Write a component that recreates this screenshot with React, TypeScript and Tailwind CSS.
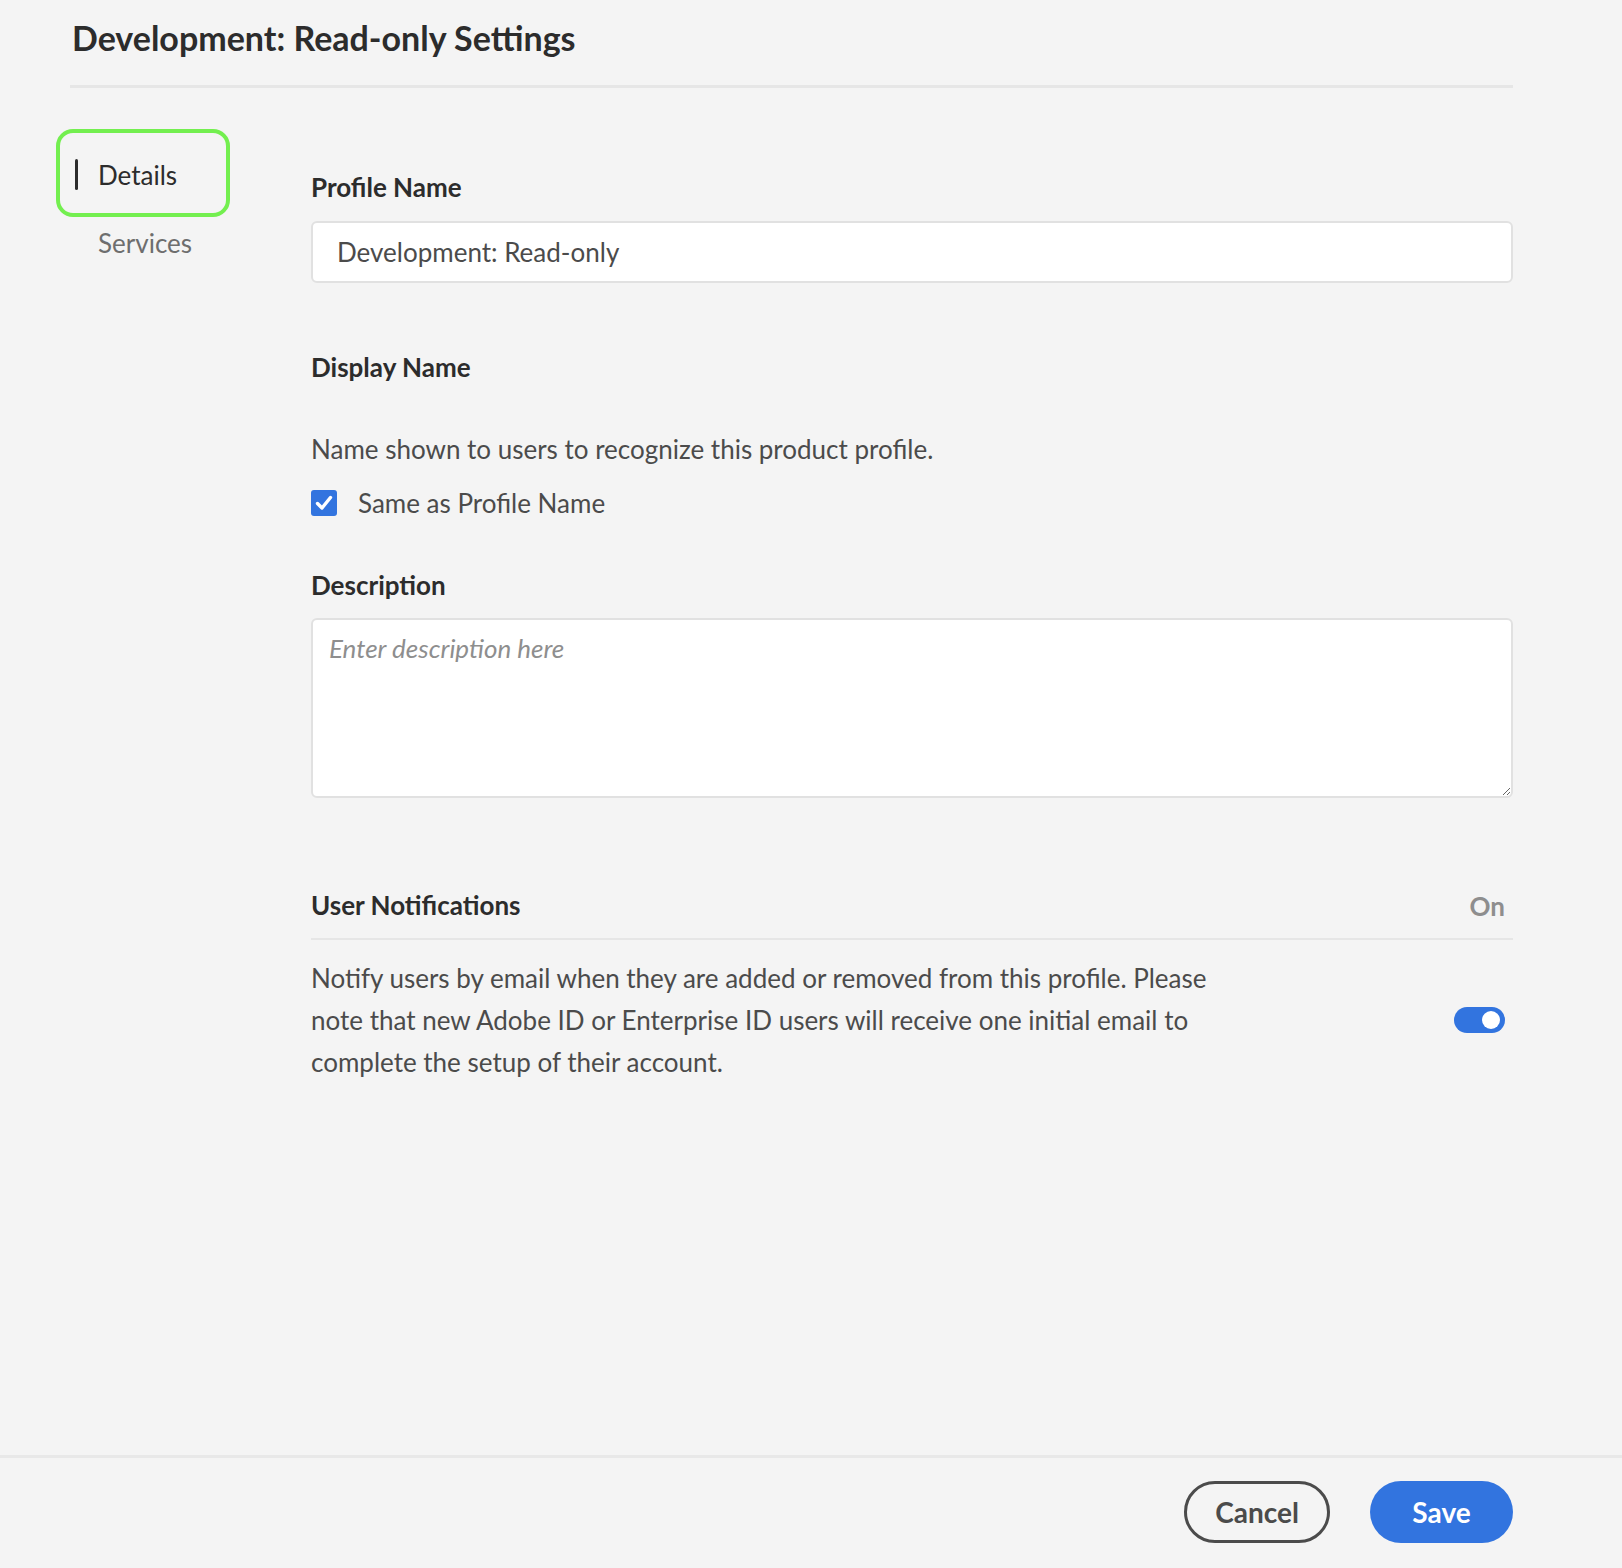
import { useState } from 'react';

const font = { fontFamily: 'Lato, "Noto Sans", sans-serif' };

const Toggle = ({ on, onChange }: { on: boolean; onChange: () => void }) => (
  <button
    onClick={onChange}
    className={`relative w-[51px] h-[26px] rounded-full shrink-0 ${on ? 'bg-[#3274df]' : 'bg-[#b3b3b3]'}`}
  >
    <span
      className={`absolute top-[4px] w-[18px] h-[18px] rounded-full bg-white ${on ? 'right-[5px]' : 'left-[5px]'}`}
    />
  </button>
);

const App = () => {
  const [same, setSame] = useState(true);
  const [notify, setNotify] = useState(true);

  return (
    <div className="h-[1568px] bg-[#f4f4f4] flex flex-col text-[#4b4b4b]" style={font}>
      {/* header */}
      <div className="ml-[70px] w-[1443px]">
        <h1 className="pt-[16px] pl-[2px] text-[34px] leading-[44px] font-bold text-[#2c2c2c]">
          Development: Read-only Settings
        </h1>
        <div className="mt-[25px] h-[3px] bg-[#e6e6e6]" />
      </div>

      <div className="flex-1 flex">
        {/* side nav */}
        <nav className="w-[311px] pl-[56px] pt-[41px] shrink-0">
          <div className="w-[174px] h-[88px] border-[4px] border-[#73ef4f] rounded-[17px] flex items-center pl-[15px] pt-[3px]">
            <span className="w-[3px] h-[31px] bg-[#2c2c2c] rounded-sm" />
            <span className="ml-[20px] text-[26px] leading-[32px] text-[#2c2c2c]">Details</span>
          </div>
          <div className="mt-[10px] ml-[42px] text-[26px] leading-[32px] text-[#6e6e6e]">Services</div>
        </nav>

        {/* form */}
        <div className="w-[1202px] pt-[83px]">
          <label className="block text-[26px] leading-[32px] font-bold text-[#2c2c2c]">Profile Name</label>
          <input
            defaultValue="Development: Read-only"
            className="mt-[18px] w-full h-[62px] bg-white border-2 border-[#e1e1e1] rounded-[6px] px-[24px] text-[26px] text-[#4b4b4b] outline-none"
          />

          <div className="mt-[68px] text-[26px] leading-[32px] font-bold text-[#2c2c2c]">Display Name</div>
          <p className="mt-[50px] text-[26px] leading-[32px]">
            Name shown to users to recognize this product profile.
          </p>
          <label className="mt-[22px] flex items-center h-[32px] cursor-pointer">
            <span
              onClick={() => setSame(!same)}
              className={`w-[26px] h-[26px] rounded-[3px] flex items-center justify-center ${same ? 'bg-[#3274df]' : 'bg-white border-2 border-[#6e6e6e]'}`}
            >
              {same && (
                <svg width="26" height="26" viewBox="0 0 26 26" fill="none">
                  <path d="M6.5 13.5 L11 18 L19.5 7.5" stroke="white" strokeWidth="3.4" strokeLinecap="round" strokeLinejoin="round" />
                </svg>
              )}
            </span>
            <span className="ml-[21px] text-[26px] leading-[32px]">Same as Profile Name</span>
          </label>

          <div className="mt-[50px] text-[26px] leading-[32px] font-bold text-[#2c2c2c]">Description</div>
          <textarea
            placeholder="Enter description here"
            className="mt-[17px] block w-full h-[180px] bg-white border-2 border-[#e1e1e1] rounded-[6px] px-[16px] pt-[12px] pb-[10px] text-[26px] leading-[32px] outline-none placeholder:italic placeholder:text-[#8e8e8e]"
          />

          <div className="mt-[89px] flex items-center justify-between pr-[8px]">
            <span className="text-[26px] leading-[32px] font-bold text-[#2c2c2c]">User Notifications</span>
            <span className="text-[26px] leading-[32px] font-bold text-[#8e8e8e] pt-[3px]">{notify ? 'On' : 'Off'}</span>
          </div>
          <div className="mt-[16px] h-[2px] bg-[#e6e6e6]" />
          <div className="mt-[17px] flex items-center justify-between pr-[8px]">
            <p className="max-w-[905px] text-[26px] leading-[42px]">
              Notify users by email when they are added or removed from this profile. Please note that new Adobe ID
              or Enterprise ID users will receive one initial email to complete the setup of their account.
            </p>
            <Toggle on={notify} onChange={() => setNotify(!notify)} />
          </div>
        </div>
      </div>

      {/* footer */}
      <div className="border-t-[3px] border-[#e8e8e8] h-[113px] flex items-start justify-end gap-[40px] pt-[23px] pr-[109px]">
        <button className="w-[146px] h-[62px] rounded-full border-[3px] border-[#4b4b4b] text-[28px] font-bold text-[#4b4b4b]">
          Cancel
        </button>
        <button className="w-[143px] h-[62px] rounded-full bg-[#3274df] text-[28px] font-bold text-white">
          Save
        </button>
      </div>
    </div>
  );
};

export default App;
